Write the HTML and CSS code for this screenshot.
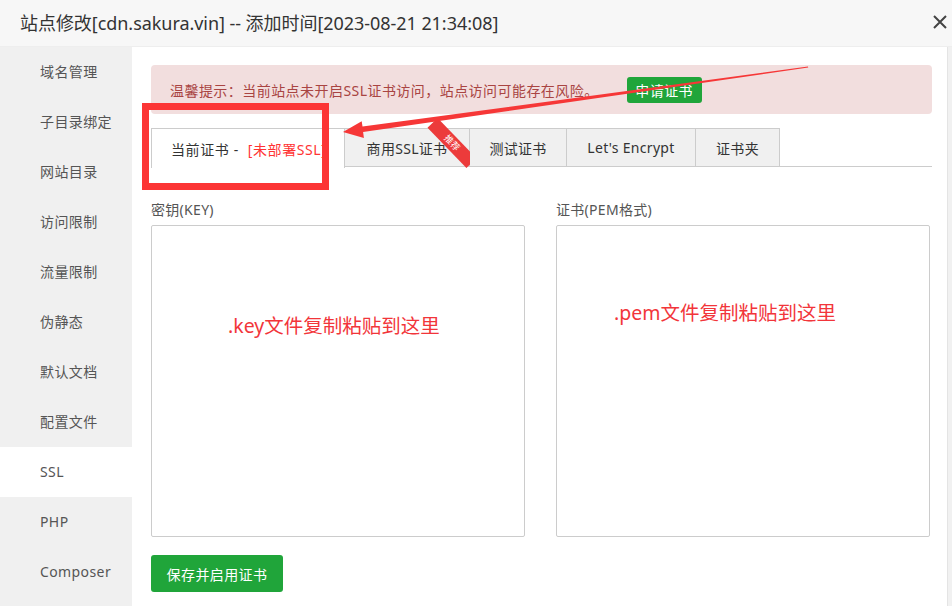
FILE: index.html
```
<!DOCTYPE html>
<html lang="zh-CN">
<head>
	<meta charset="UTF-8">
	<title>站点修改</title>
	<link rel="stylesheet" href="styles.css">
</head>
<body class="body">
	<div class="layer">
		<header class="layer__head">
			<h1 class="layer__title">站点修改[cdn.sakura.vin] -- 添加时间[2023-08-21 21:34:08]</h1>
			<svg class="layer__close" width="16" height="16" viewBox="0 0 16 16"><path d="M2 2 L14 14 M14 2 L2 14" stroke="#444" stroke-width="2" fill="none"/></svg>
		</header>
		<div class="layer__body">
			<nav class="menu">
				<a class="menu__item">域名管理</a>
				<a class="menu__item">子目录绑定</a>
				<a class="menu__item">网站目录</a>
				<a class="menu__item">访问限制</a>
				<a class="menu__item">流量限制</a>
				<a class="menu__item">伪静态</a>
				<a class="menu__item">默认文档</a>
				<a class="menu__item">配置文件</a>
				<a class="menu__item menu__item--on">SSL</a>
				<a class="menu__item">PHP</a>
				<a class="menu__item">Composer</a>
			</nav>
			<main class="content">
				<div class="alert">
					<span class="alert__text">温馨提示：当前站点未开启SSL证书访问，站点访问可能存在风险。</span>
					<a class="btn btn--small">申请证书</a>
				</div>
				<div class="tabs">
					<span class="tabs__item tabs__item--on">当前证书 - <em class="tabs__state">[未部署SSL]</em></span>
					<span class="tabs__item tabs__item--buy">商用SSL证书<i class="ribbon">推荐</i></span>
					<span class="tabs__item tabs__item--test">测试证书</span>
					<span class="tabs__item tabs__item--le">Let's Encrypt</span>
					<span class="tabs__item tabs__item--folder">证书夹</span>
				</div>
				<div class="cert">
					<div class="cert__col">
						<label class="cert__label">密钥(KEY)</label>
						<div class="cert__box cert__box--key"><span class="cert__hint">.key文件复制粘贴到这里</span></div>
					</div>
					<div class="cert__col">
						<label class="cert__label">证书(PEM格式)</label>
						<div class="cert__box cert__box--pem"><span class="cert__hint">.pem文件复制粘贴到这里</span></div>
					</div>
				</div>
				<a class="btn btn--save">保存并启用证书</a>
			</main>
			<div class="scroll"></div>
		</div>
	</div>
	<!-- annotations drawn over the screenshot -->
	<div class="mark"></div>
	<svg class="arrow" width="952" height="606" viewBox="0 0 952 606">
		<polygon fill="#f63737" points="343,132 361.7,121.3 362.5,126.5 808,66.6 808.2,67.6 363.1,132 363.9,138"/>
	</svg>
</body>
</html>
```
FILE: styles.css
```
*,
*::before,
*::after {
	box-sizing: border-box;
}

.body {
	margin: 0;
	width: 952px;
	height: 606px;
	overflow: hidden;
	position: relative;
	font-family: "Noto Sans", "Noto Sans CJK SC", sans-serif;
	font-size: 14px;
	color: #333;
	background: #fff;
}

.layer {
	display: flex;
	flex-direction: column;
	height: 100%;
}

.layer__head {
	display: flex;
	align-items: center;
	justify-content: space-between;
	height: 47px;
	padding: 0 4px 2px 20px;
	background: #f7f7f7;
	border-bottom: 1px solid #eee;
}

.layer__title {
	margin: 0;
	font-size: 18px;
	font-weight: normal;
	color: #333;
	letter-spacing: -0.05px;
}

.layer__body {
	flex: 1;
	display: flex;
}

.menu {
	width: 132px;
	flex: none;
	background: #f0f0f0;
	display: flex;
	flex-direction: column;
}

.menu__item {
	height: 50px;
	line-height: 50px;
	padding-left: 40px;
	color: #555;
	letter-spacing: 0.4px;
}

.menu__item--on {
	background: #fff;
}

.content {
	flex: 1;
	padding: 18px 15px 0 19px;
}

.alert {
	display: flex;
	align-items: center;
	height: 49px;
	padding: 0 19px;
	background: #f2dede;
	border-radius: 4px;
	color: #a94442;
}

.alert__text {
	letter-spacing: 0.45px;
}

.btn {
	display: inline-flex;
	align-items: center;
	justify-content: center;
	background: #20a53a;
	color: #fff;
	border-radius: 3px;
	letter-spacing: 0.4px;
}

.btn--small {
	margin-left: 28px;
	width: 75px;
	height: 26px;
}

.btn--save {
	margin-top: 18px;
	width: 132px;
	height: 37px;
}

.tabs {
	display: flex;
	margin-top: 14px;
	height: 39px;
	border-bottom: 1px solid #ccc;
}

.tabs__item {
	position: relative;
	display: flex;
	align-items: center;
	justify-content: center;
	height: 39px;
	background: #f0f0f0;
	border: 1px solid #ccc;
	border-left: none;
	color: #333;
	letter-spacing: 0.3px;
}

.tabs__item--buy {
	width: 125px;
}

.tabs__item--test {
	width: 97px;
}

.tabs__item--le {
	width: 129px;
}

.tabs__item--folder {
	width: 84px;
}

.tabs__item--on {
	justify-content: flex-start;
	width: 194px;
	height: 40px;
	padding-left: 19px;
	background: #fff;
	border-left: 1px solid #ccc;
	border-bottom: none;
	white-space: nowrap;
	overflow: hidden;
	letter-spacing: 0.6px;
}

.tabs__state {
	font-style: normal;
	color: #f33;
	margin-left: 9px;
}

.ribbon {
	position: absolute;
	left: 79px;
	top: 7px;
	width: 56px;
	height: 14px;
	line-height: 14px;
	background: #ec3b3b;
	color: #fff;
	font-style: normal;
	font-size: 9px;
	letter-spacing: 0;
	text-align: center;
	transform: rotate(46deg);
}

.cert {
	display: flex;
	gap: 31px;
	margin-top: 33px;
}

.cert__col {
	display: flex;
	flex-direction: column;
	width: 374px;
}

.cert__label {
	color: #555;
	line-height: 20px;
	margin-bottom: 5px;
	letter-spacing: 0.3px;
}

.cert__box {
	height: 312px;
	border: 1px solid #ccc;
	border-radius: 2px;
	padding-left: 76px;
}

.cert__box--key {
	padding-top: 84px;
}

.cert__box--pem {
	padding-top: 71px;
	padding-left: 57px;
}

.cert__hint {
	font-size: 19.5px;
	color: #f2353a;
}

.scroll {
	width: 5px;
	flex: none;
	background: #f1f1f1;
	border-left: 1px solid #e4e4e4;
}

.mark {
	position: absolute;
	left: 142px;
	top: 103px;
	width: 187px;
	height: 87px;
	border: 7px solid #fc3535;
}

.arrow {
	position: absolute;
	left: 0;
	top: 0;
	pointer-events: none;
}
```
